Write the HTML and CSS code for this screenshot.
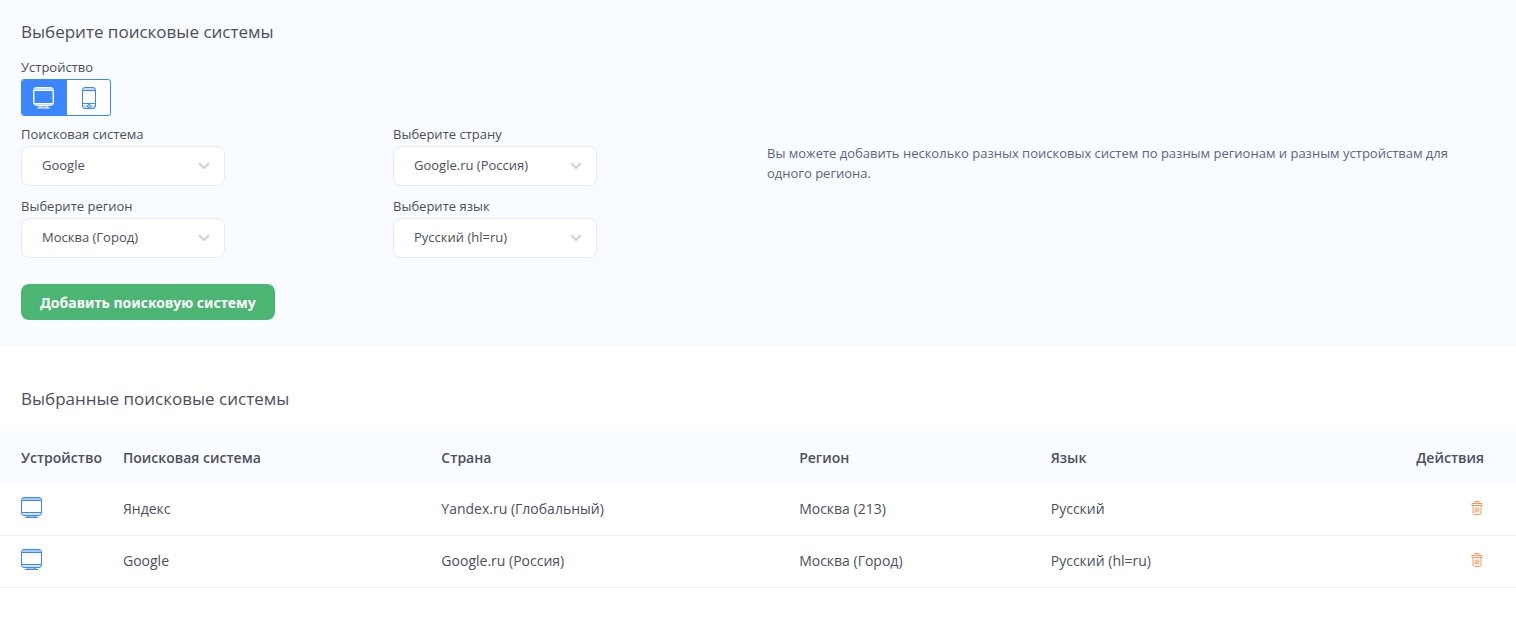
FILE: index.html
```html
<!DOCTYPE html>
<html lang="ru">
<head>
<meta charset="utf-8">
<meta name="viewport" content="width=device-width, initial-scale=1">
<title>Поисковые системы</title>
<link rel="stylesheet" href="styles.css">
</head>
<body>
<svg class="sprite" aria-hidden="true">
  <symbol id="monitor" viewBox="0 0 22 22" fill="none" stroke="currentColor">
    <path d="M1.500 2h18" stroke-width="3" opacity=".45"/>
    <rect x="0.500" y="0.500" width="20" height="18" rx="2.500"/>
    <path d="M1 3.500h19M1 15.500h19M7.500 18.500l-1 2M13.500 18.500l1 2M4 20.500h13"/>
    <path d="M1.500 17h18M6 19.500h9" opacity=".4"/>
  </symbol>
  <symbol id="monitor-bold" viewBox="0 0 22 22" fill="none" stroke="currentColor">
    <path d="M1.500 2h18" stroke-width="3" opacity=".75"/>
    <rect x="0.500" y="0.500" width="20" height="18" rx="3"/>
    <path d="M1.500 4v12M19.500 4v12" opacity=".45"/>
    <path d="M1 3.500h19M1 16.500h19M7.500 18.500l-1 2M13.500 18.500l1 2M4 21h13"/>
    <path d="M2 17.500h17M6 20h9" opacity=".7"/>
  </symbol>
  <symbol id="phone" viewBox="0 0 16 24" fill="none" stroke="currentColor">
    <path d="M2 3h12M2 20.500h12" stroke-width="3" opacity=".3"/>
    <rect x="1.500" y="1.500" width="13" height="21" rx="2.500"/>
    <path d="M2 4.500h12M2 17.500h12"/>
    <circle cx="8" cy="20" r="1.500"/>
  </symbol>
  <symbol id="trash" viewBox="0 0 12 14" fill="none" stroke="currentColor">
    <path d="M4 2V.5h4V2M1 2.500h10v2H1zM2 4.500v7.500q0 1.500 1.500 1.500h5q1.500 0 1.500-1.500V4.500"/>
    <path d="M3.500 9h5" stroke-width="5" opacity=".4"/>
    <path d="M4.500 6.500v5M6 6.500v5M7.500 6.500v5" opacity=".5"/>
  </symbol>
  <symbol id="chevron" viewBox="0 0 12 8" fill="none" stroke="currentColor" stroke-width="2">
    <path d="M1 1l5 5 5-5"/>
  </symbol>
</svg>

<section class="picker">
  <h2 class="title">Выберите поисковые системы</h2>
  <span class="label" id="device-label">Устройство</span>
  <div class="toggle" role="group" aria-labelledby="device-label">
    <button class="toggle-btn active" type="button" aria-pressed="true" aria-label="Компьютер"><svg class="icon-monitor"><use href="#monitor-bold"/></svg></button>
    <button class="toggle-btn" type="button" aria-pressed="false" aria-label="Телефон"><svg class="icon-phone"><use href="#phone"/></svg></button>
  </div>
  <div class="grid">
    <div class="fields">
      <div class="field">
        <label class="label" for="engine">Поисковая система</label>
        <div class="select-wrap"><select class="select" id="engine"><option>Google</option></select><svg class="chevron"><use href="#chevron"/></svg></div>
      </div>
      <div class="field">
        <label class="label" for="region">Выберите регион</label>
        <div class="select-wrap"><select class="select" id="region"><option>Москва (Город)</option></select><svg class="chevron"><use href="#chevron"/></svg></div>
      </div>
    </div>
    <div class="fields">
      <div class="field">
        <label class="label" for="country">Выберите страну</label>
        <div class="select-wrap"><select class="select" id="country"><option>Google.ru (Россия)</option></select><svg class="chevron"><use href="#chevron"/></svg></div>
      </div>
      <div class="field">
        <label class="label" for="language">Выберите язык</label>
        <div class="select-wrap"><select class="select" id="language"><option>Русский (hl=ru)</option></select><svg class="chevron"><use href="#chevron"/></svg></div>
      </div>
    </div>
    <p class="hint">Вы можете добавить несколько разных поисковых систем по разным регионам и разным устройствам для одного региона.</p>
  </div>
  <button class="add" type="button">Добавить поисковую систему</button>
</section>

<section class="selected">
  <h2 class="title">Выбранные поисковые системы</h2>
  <table class="table">
    <colgroup><col class="c-device"><col class="c-engine"><col class="c-country"><col class="c-region"><col class="c-lang"><col></colgroup>
    <thead>
      <tr><th>Устройство</th><th>Поисковая система</th><th>Страна</th><th>Регион</th><th>Язык</th><th class="actions">Действия</th></tr>
    </thead>
    <tbody>
      <tr>
        <td><svg class="icon-monitor" role="img" aria-label="Компьютер"><use href="#monitor"/></svg></td>
        <td>Яндекс</td><td>Yandex.ru (Глобальный)</td><td>Москва (213)</td><td>Русский</td>
        <td class="actions"><button class="delete" type="button" aria-label="Удалить"><svg class="icon-trash"><use href="#trash"/></svg></button></td>
      </tr>
      <tr>
        <td><svg class="icon-monitor" role="img" aria-label="Компьютер"><use href="#monitor"/></svg></td>
        <td>Google</td><td>Google.ru (Россия)</td><td>Москва (Город)</td><td>Русский (hl=ru)</td>
        <td class="actions"><button class="delete" type="button" aria-label="Удалить"><svg class="icon-trash"><use href="#trash"/></svg></button></td>
      </tr>
    </tbody>
  </table>
</section>
</body>
</html>
```
FILE: styles.css
```css
* { box-sizing: border-box; }

body {
  margin: 0;
  background: #fff;
  color: #4d4f5c;
  font-family: "Open Sans", "Noto Sans", sans-serif;
  font-size: 14px;
}

button, select { font-family: inherit; color: inherit; }

svg { display: block; }
.sprite { position: absolute; width: 0; height: 0; }

.title {
  margin: 0;
  font-size: 17px;
  line-height: 24px;
  font-weight: 400;
}

.label {
  display: block;
  font-size: 13px;
  line-height: 20px;
}

.picker { padding: 20px 21px 26px; background: #f8fbff; }
.picker .title { margin-bottom: 13px; }

.toggle {
  display: inline-flex;
  height: 37px;
  margin: 2px 0 8px;
  overflow: hidden;
  vertical-align: top;
  background: #fff;
  border: 1px solid #3b86ff;
  border-radius: 3px;
}
.toggle-btn {
  display: grid;
  place-items: center;
  width: 43px;
  padding: 0;
  color: #3b86ff;
  background: none;
  border: 0;
}
.toggle-btn.active { width: 45px; padding-right: 1px; color: #fff; background: #3b86ff; }

.icon-monitor { width: 22px; height: 22px; }
.icon-phone { width: 16px; height: 24px; }
.icon-trash { width: 12px; height: 14px; }
td .icon-monitor { margin-bottom: 4px; color: #3b86ff; }

.grid {
  display: grid;
  grid-template-columns: 1fr 1fr 2fr;
  margin: 0 -8px 0 -10px;
}
.fields { display: grid; gap: 10px; padding: 0 10px; }
.fields + .fields { padding-left: 9px; }

.field { width: 204px; }
.field .label { margin-bottom: 2px; }
.select-wrap { display: grid; align-items: center; position: relative; }
.select {
  appearance: none;
  width: 100%;
  height: 40px;
  padding: 0 36px 2px 20px;
  font-size: 13px;
  background: #fff;
  border: 1px solid #e8e9f3;
  border-radius: 8px;
}
.chevron {
  position: absolute;
  right: 15px;
  width: 12px;
  height: 8px;
  color: #cfd1d6;
  pointer-events: none;
}

.hint {
  margin: 19px 0 0;
  padding: 0 32px 0 10px;
  font-size: 13px;
  line-height: 20px;
  color: #5d6580;
}

.add {
  display: block;
  height: 36px;
  margin-top: 26px;
  padding: 1px 19px 0;
  font-family: "Noto Sans", sans-serif;
  font-size: 14px;
  font-weight: 700;
  color: #fff;
  background: #4bb574;
  border: 0;
  border-radius: 8px;
}

.selected { padding-top: 41px; }
.selected .title { margin: 0 21px 20px; }

.table { width: 100%; table-layout: fixed; border-spacing: 0; }
.c-device { width: 102px; }
.c-engine { width: 21%; }
.c-country { width: 23.6%; }
.c-region { width: 16.6%; }
.c-lang { width: 19%; }
th, td { padding: 0 0 0 21px; text-align: left; white-space: nowrap; }
th { height: 53px; font-size: 14px; font-weight: 600; background: #f8fbff; }
td { height: 52px; padding-bottom: 2px; font-size: 14px; border-bottom: 1px solid #f1f1f3; }
td .icon-monitor { margin-bottom: 2px; }
.table .actions { padding: 0 33px 0 0; text-align: right; }
.table th.actions { padding-right: 32px; }
.delete {
  display: block;
  margin: 0 0 4px auto;
  padding: 0;
  color: #ed9b60;
  background: none;
  border: 0;
}
```
